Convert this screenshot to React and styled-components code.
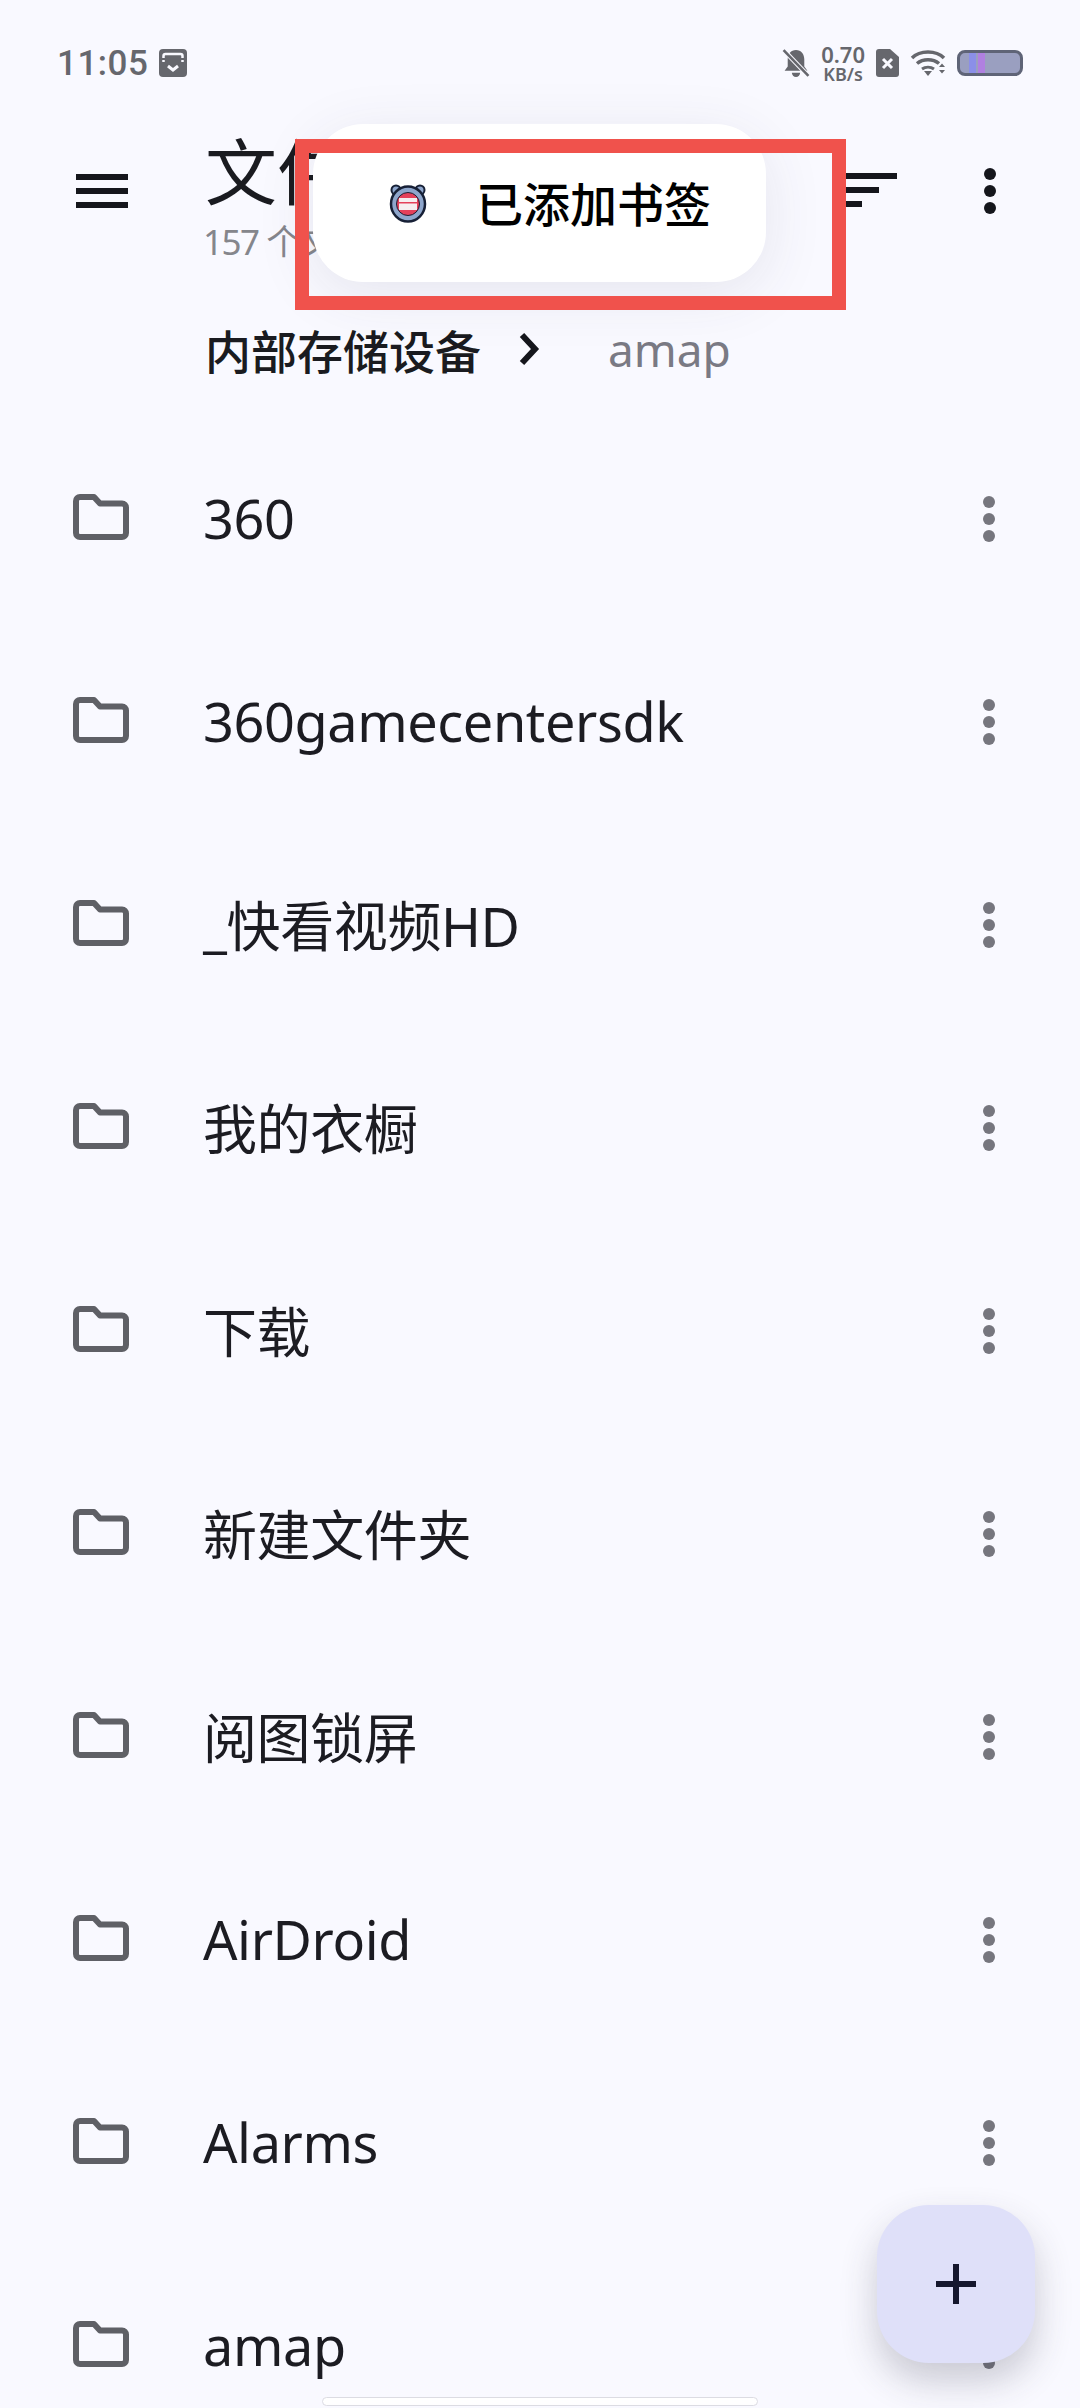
import React from "react";
import styled, { createGlobalStyle } from "styled-components";

const FONT = `"Noto Sans", "Noto Sans CJK SC", sans-serif`;

const GlobalStyle = createGlobalStyle`
  html, body {
    margin: 0;
    padding: 0;
    background: #f9f9ff;
  }
  body {
    font-family: ${FONT};
  }
`;

const Screen = styled.div`
  position: relative;
  width: 1080px;
  height: 2408px;
  overflow: hidden;
  background: #f9f9ff;
`;

const StatusBar = styled.div`
  display: flex;
  align-items: center;
  justify-content: space-between;
  height: 64px;
  padding: 31px 57px 0 57px;
  color: #66676d;
`;

const StatusGroup = styled.div`
  display: flex;
  align-items: center;
  gap: ${props => props.$gap || 10}px;
`;

const Clock = styled.span`
  font-family: "Roboto", sans-serif;
  font-size: 35px;
  font-weight: 500;
  letter-spacing: 0.5px;
`;

const Speed = styled.div`
  display: flex;
  flex-direction: column;
  align-items: center;
  font-size: 22px;
  line-height: 22px;
  font-weight: 600;
  small {
    font-size: 18px;
    line-height: 18px;
  }
`;

const Battery = styled.div`
  display: flex;
  width: 66px;
  height: 26px;
  box-sizing: border-box;
  padding-left: 9px;
  border: 3px solid #5f6477;
  border-radius: 8px;
  background: #9a9fc0;
`;

const BatteryBar = styled.span`
  width: 7px;
  margin-right: 2px;
  background: ${props => props.$color};
`;

const AppBar = styled.header`
  display: flex;
  height: 160px;
  margin-top: 31px;
`;

const MenuButton = styled.div`
  display: flex;
  flex-direction: column;
  gap: 8px;
  width: 52px;
  margin: 48px 75px 0 76px;
  span {
    height: 6px;
    background: #15161c;
  }
`;

const TitleBlock = styled.div`
  flex: 1;
`;

const Title = styled.h1`
  margin: 2px 0 0;
  padding-left: 2px;
  font-size: 72px;
  line-height: 86px;
  font-weight: 400;
  color: #1a1b20;
`;

const Subtitle = styled.div`
  margin-top: 6px;
  font-size: 35px;
  line-height: 44px;
  letter-spacing: -1.5px;
  color: #85868c;
`;

const AppActions = styled.div`
  display: flex;
  align-items: flex-start;
  gap: 85px;
  padding: 40px 0 0;
  margin-right: 82px;
`;

const Breadcrumb = styled.nav`
  display: flex;
  align-items: center;
  height: 60px;
  margin-top: 33px;
  padding-left: 205px;
  font-size: 46px;
  font-weight: 500;
  color: #1a1b20;
`;

const ChevronMark = styled.svg`
  margin-left: 38px;
`;

const CrumbCurrent = styled.span`
  margin-left: 67px;
  font-weight: 400;
  color: #7a7a84;
`;

const FileList = styled.main`
  padding-top: 38px;
`;

const Row = styled.div`
  display: flex;
  align-items: center;
  height: 203px;
  padding: 0 83px 0 73px;
`;

const FolderMark = styled.svg`
  margin-bottom: 4px;
`;

const RowName = styled.span`
  flex: 1;
  margin-left: 74px;
  margin-bottom: 2px;
  font-size: 54px;
  letter-spacing: -0.4px;
  color: #1c1c22;
`;

const Toast = styled.div`
  position: absolute;
  top: 124px;
  left: 313px;
  display: flex;
  align-items: center;
  width: 453px;
  height: 158px;
  padding-left: 75px;
  box-sizing: border-box;
  border-radius: 50px;
  background: #ffffff;
  box-shadow: 0 12px 60px rgba(60, 60, 90, 0.1);
  font-size: 47px;
  font-weight: 500;
  color: #000000;
`;

const ToastLabel = styled.span`
  margin-left: 48px;
  margin-top: -4px;
`;

const Annotation = styled.div`
  position: absolute;
  top: 139px;
  left: 295px;
  width: 551px;
  height: 171px;
  box-sizing: border-box;
  border: 14px solid #f0524c;
`;

const Fab = styled.div`
  position: absolute;
  left: 877px;
  top: 2205px;
  width: 158px;
  height: 158px;
  display: flex;
  align-items: center;
  justify-content: center;
  border-radius: 52px;
  background: #dfe0f9;
  box-shadow: 0 18px 36px rgba(50, 50, 70, 0.24);
`;

const NavPill = styled.div`
  position: absolute;
  left: 322px;
  top: 2397px;
  width: 436px;
  height: 9px;
  box-sizing: border-box;
  border: 1.5px solid #dcdce3;
  border-radius: 5px;
  background: #ffffff;
`;

const FolderIcon = () => (
  <FolderMark width="56" height="46" viewBox="0 0 56 46" fill="none">
    <path
      d="M7 3h14l6 6.500h22a4 4 0 0 1 4 4V39a4 4 0 0 1-4 4H7a4 4 0 0 1-4-4V7a4 4 0 0 1 4-4z"
      stroke="#5f6066"
      strokeWidth="6"
      strokeLinejoin="round"
    />
  </FolderMark>
);

const Kebab = ({ color = "#76767e", r = 6, gap = 17 }) => (
  <svg width="16" height={gap * 2 + 16} viewBox={`0 0 16 ${gap * 2 + 16}`}>
    <circle cx="8" cy="8" r={r} fill={color} />
    <circle cx="8" cy={8 + gap} r={r} fill={color} />
    <circle cx="8" cy={8 + gap * 2} r={r} fill={color} />
  </svg>
);

const SortIcon = () => (
  <svg width="52" height="41" viewBox="0 0 52 41">
    <rect x="0" y="7" width="52" height="6" fill="#15161c" />
    <rect x="0" y="21" width="34" height="6" fill="#15161c" />
    <rect x="0" y="35" width="17" height="6" fill="#15161c" />
  </svg>
);

const Chevron = () => (
  <ChevronMark width="22" height="34" viewBox="0 0 22 34" fill="none">
    <path d="M3 3l13 14L3 31" stroke="#15161c" strokeWidth="6" />
  </ChevronMark>
);

const CalendarIcon = () => (
  <svg width="28" height="28" viewBox="0 0 28 28">
    <rect width="28" height="28" rx="4" fill="#66676d" />
    <path d="M4.500 13V7a2 2 0 0 1 2-2h15a2 2 0 0 1 2 2v6" fill="none" stroke="#f9f9ff" strokeWidth="2.500" />
    <path d="M3 10h22" stroke="#66676d" strokeWidth="2" />
    <path d="M9 17l5 4 5-4" fill="none" stroke="#f9f9ff" strokeWidth="3" />
  </svg>
);

const MutedBell = () => (
  <svg width="28" height="29" viewBox="0 0 26 28">
    <path d="M13 1c5 0 8 4 8 9v7l3 4H2l3-4v-7c0-5 3-9 8-9z" fill="#66676d" />
    <path d="M9 23a4 4 0 0 0 8 0z" fill="#66676d" />
    <path d="M1 1l24 25" stroke="#f9f9ff" strokeWidth="4.500" />
    <path d="M1 1l24 25" stroke="#66676d" strokeWidth="2.500" />
  </svg>
);

const SimIcon = () => (
  <svg width="23" height="28" viewBox="0 0 23 28">
    <path d="M3 0h11l9 8v17a3 3 0 0 1-3 3H3a3 3 0 0 1-3-3V3a3 3 0 0 1 3-3z" fill="#66676d" />
    <path d="M7 10l9 9M16 10l-9 9" stroke="#f9f9ff" strokeWidth="3" />
  </svg>
);

const WifiIcon = () => (
  <svg width="36" height="28" viewBox="0 0 36 28" fill="none">
    <path d="M2 9c8-8 24-8 32 0" stroke="#66676d" strokeWidth="3.500" />
    <path d="M7 14.500c6-5 16-5 22 0" stroke="#66676d" strokeWidth="3.500" />
    <path d="M12 20c3.500-2.500 8.500-2.500 12 0" stroke="#66676d" strokeWidth="3" />
    <path d="M14 22h8l-4 5z" fill="#66676d" />
    <path d="M29 18l3-3.500 3 3.500zM29 21l3 3.500 3-3.500z" fill="#66676d" />
  </svg>
);

const BookmarkAppIcon = () => (
  <svg width="40" height="40" viewBox="0 0 40 40">
    <circle cx="8" cy="7" r="4.500" fill="#8ea6cc" stroke="#172036" strokeWidth="2" />
    <circle cx="32" cy="7" r="4.500" fill="#8ea6cc" stroke="#172036" strokeWidth="2" />
    <ellipse cx="20" cy="21" rx="17" ry="17.500" fill="#8ea6cc" stroke="#172036" strokeWidth="2.500" />
    <circle cx="20" cy="21" r="11.500" fill="#e4405a" stroke="#172036" strokeWidth="1" />
    <rect x="11" y="15" width="18" height="12" fill="#f6eef0" />
    <rect x="11" y="19" width="18" height="1.500" fill="#e4405a" />
  </svg>
);

const PlusIcon = () => (
  <svg width="40" height="40" viewBox="0 0 40 40">
    <path d="M20 0v40M0 20h40" stroke="#15172e" strokeWidth="6" />
  </svg>
);

const folders = [
  "360",
  "360gamecentersdk",
  "_快看视频HD",
  "我的衣橱",
  "下载",
  "新建文件夹",
  "阅图锁屏",
  "AirDroid",
  "Alarms",
  "amap",
];

export default function App() {
  return (
    <Screen>
      <GlobalStyle />
      <StatusBar>
        <StatusGroup $gap={11}>
          <Clock>11:05</Clock>
          <CalendarIcon />
        </StatusGroup>
        <StatusGroup $gap={11}>
          <MutedBell />
          <Speed>
            0.70
            <small>KB/s</small>
          </Speed>
          <SimIcon />
          <WifiIcon />
          <Battery>
            <BatteryBar $color="#8b8fe8" />
            <BatteryBar $color="#b080e0" />
          </Battery>
        </StatusGroup>
      </StatusBar>
      <AppBar>
        <MenuButton>
          <span />
          <span />
          <span />
        </MenuButton>
        <TitleBlock>
          <Title>文件</Title>
          <Subtitle>157 个文件夹</Subtitle>
        </TitleBlock>
        <AppActions>
          <SortIcon />
          <Kebab color="#15161c" />
        </AppActions>
      </AppBar>
      <Breadcrumb>
        内部存储设备
        <Chevron />
        <CrumbCurrent>amap</CrumbCurrent>
      </Breadcrumb>
      <FileList>
        {folders.map(name => (
          <Row key={name}>
            <FolderIcon />
            <RowName>{name}</RowName>
            <Kebab />
          </Row>
        ))}
      </FileList>
      <Toast>
        <BookmarkAppIcon />
        <ToastLabel>已添加书签</ToastLabel>
      </Toast>
      <Annotation />
      <Fab>
        <PlusIcon />
      </Fab>
      <NavPill />
    </Screen>
  );
}
